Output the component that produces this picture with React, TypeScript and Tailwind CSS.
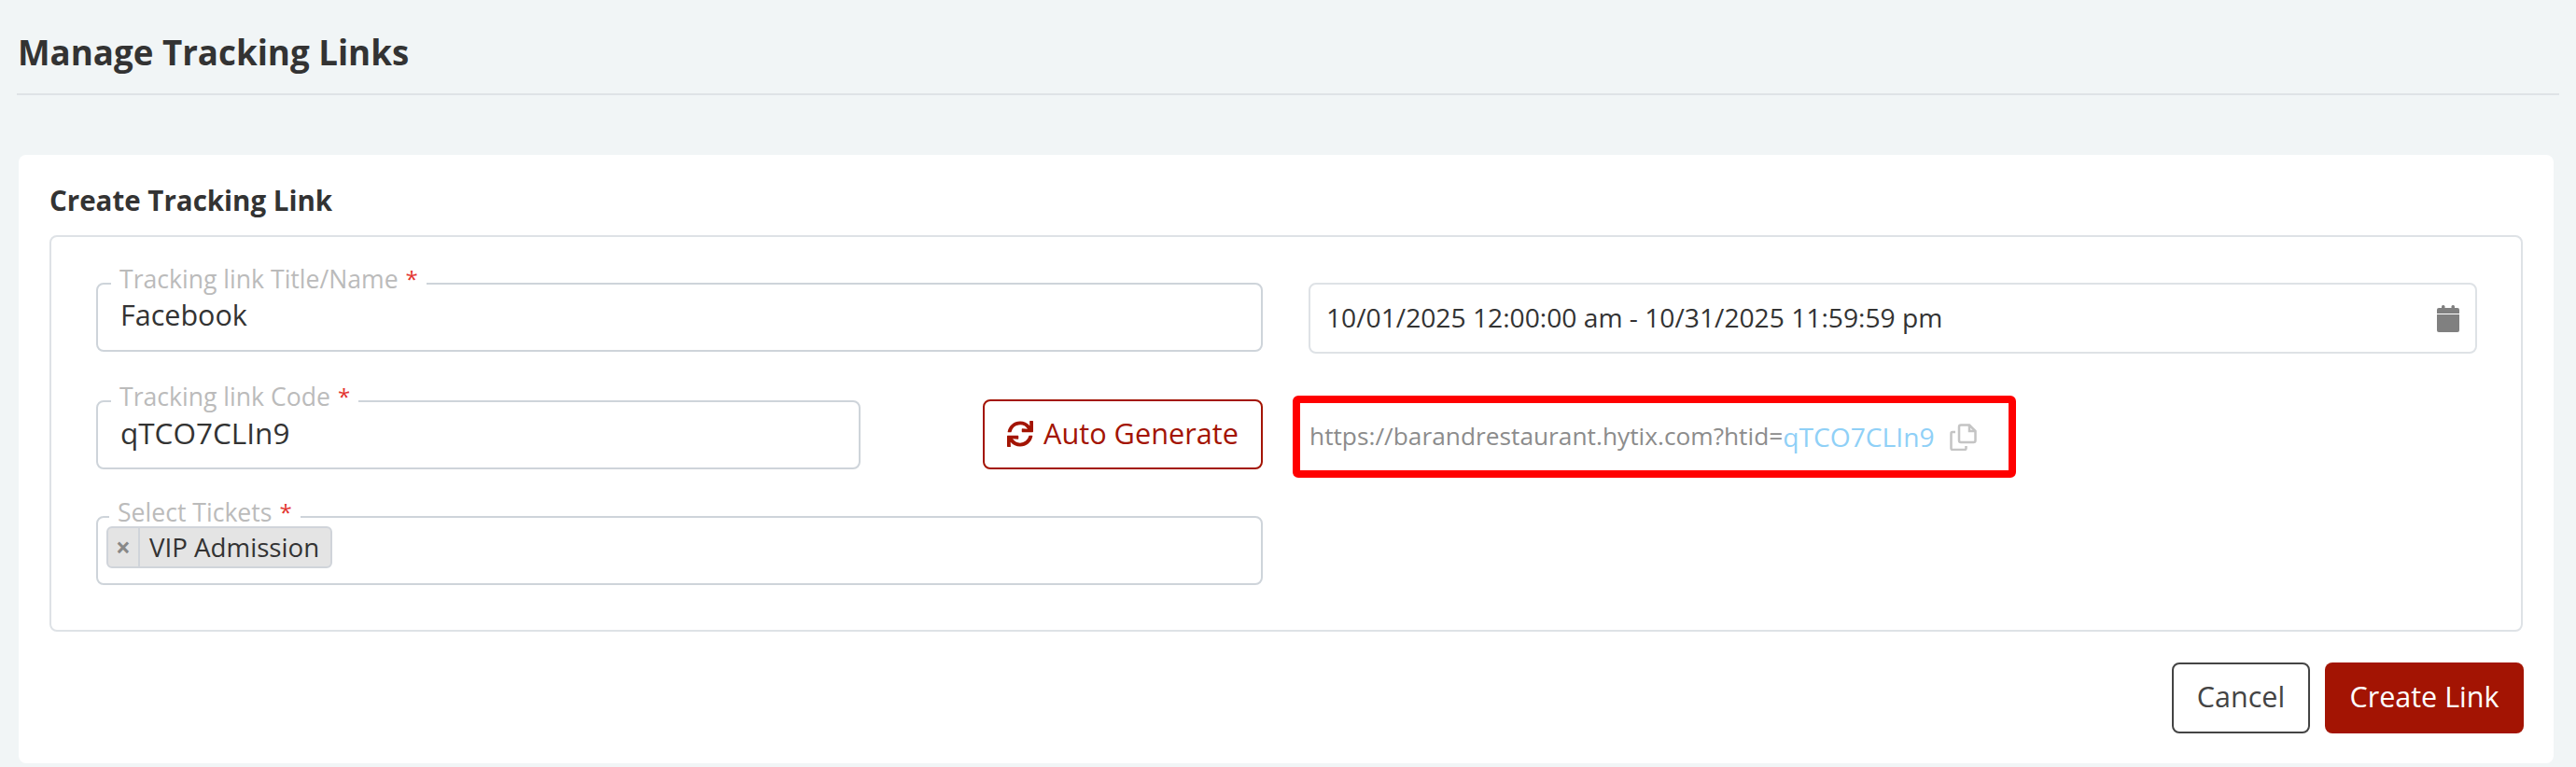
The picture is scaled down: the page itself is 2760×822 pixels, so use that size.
import { FaSync } from 'react-icons/fa';

const ui = "font-['Open_Sans','Noto_Sans',sans-serif]";

function Legend({ label, inset = 'left-[14px]' }: { label: string; inset?: string }) {
  return (
    <span className={`absolute top-[-21px] ${inset} flex h-[30px] items-center text-[26.6px] leading-none text-[#bbbbbb]`}>
      <span className="mt-[8px] h-[20px] bg-white pl-[9px]" />
      <span className="bg-white">{label}</span>
      <span className="bg-white pr-[9px] pl-[8px] text-[24px] text-[#e3342f]">*</span>
    </span>
  );
}

function Calendar() {
  return (
    <svg width="24" height="29" viewBox="0 0 24 29" fill="#808080" className="shrink-0">
      <rect x="5" y="0" width="3.5" height="6" rx="1.5" />
      <rect x="15.5" y="0" width="3.5" height="6" rx="1.5" />
      <path d="M2 3h20a2 2 0 0 1 2 2v4H0V5a2 2 0 0 1 2-2z" />
      <path d="M0 10h24v17a2 2 0 0 1-2 2H2a2 2 0 0 1-2-2z" />
    </svg>
  );
}

function CopyIcon() {
  return (
    <svg width="29" height="29" viewBox="0 0 29 29" fill="none" stroke="#c4c4c4" strokeWidth="2.5" className="ml-[16px] shrink-0">
      <path d="M12 1.5h9l6.5 6.5v10a2 2 0 0 1-2 2H12a2 2 0 0 1-2-2V3.5a2 2 0 0 1 2-2z" />
      <path d="M21 1.5V8h6.5" />
      <path d="M6 9H3a1.5 1.5 0 0 0-1.5 1.5v16A1.5 1.5 0 0 0 3 28h13a1.5 1.5 0 0 0 1.5-1.5V24" />
    </svg>
  );
}

export default function App() {
  return (
    <div className={`${ui} h-[822px] w-[2760px] overflow-hidden bg-[#f1f5f6] pt-[36px] pl-[18px] text-[#333333]`}>
      <div className="h-[66px] w-[2724px] border-b-2 border-[#dfe3e6]">
        <h1 className="pl-[1px] text-[36.7px] leading-[40px] font-bold">Manage Tracking Links</h1>
      </div>

      <div className="mt-[64px] ml-[2px] h-[652px] w-[2716px] rounded-[8px] bg-white pt-[24px] pl-[33px]">
        <h2 className="text-[29.5px] leading-[50px] font-bold">Create Tracking Link</h2>

        <div className="mt-[12px] h-[425px] w-[2650px] rounded-[8px] border-2 border-[#dee2e6] pt-[49px] pl-[48px]">
          <div className="flex items-start gap-[49px]">
            <div className="relative flex h-[74px] w-[1250px] items-center rounded-[8px] border-2 border-[#ced4da] pb-[4px] pl-[24px] text-[30.5px]">
              <Legend label="Tracking link Title/Name" />
              Facebook
            </div>
            <div className="flex h-[76px] w-[1252px] items-center justify-between rounded-[8px] border-2 border-[#dee2e6] pr-[17px] pl-[17px] text-[28.2px]">
              <span className="pb-[2px]">10/01/2025 12:00:00 am - 10/31/2025 11:59:59 pm</span>
              <Calendar />
            </div>
          </div>

          <div className="mt-[45px] flex items-start">
            <div className="relative mt-[5px] flex h-[74px] w-[819px] items-center rounded-[8px] border-2 border-[#ced4da] pb-[4px] pl-[24px] text-[31.5px]">
              <Legend label="Tracking link Code" />
              qTCO7CLIn9
            </div>
            <button className="mt-[4px] ml-[131px] flex h-[75px] w-[300px] items-center justify-center gap-[11px] rounded-[8px] border-2 border-[#a31403] pb-[2px] text-[30.7px] text-[#a31403]">
              <FaSync size={28} />
              Auto Generate
            </button>
            <div className="ml-[32px] flex h-[88px] w-[775px] items-center rounded-[6px] border-8 border-[#ff0000] pl-[10px]">
              <span className="text-[26.3px] text-[#8c8c8c]">https://barandrestaurant.hytix.com?htid=</span>
              <span className="text-[28.2px] text-[#8fd0f7]">qTCO7CLIn9</span>
              <CopyIcon />
            </div>
          </div>

          <div className="relative mt-[41px] flex h-[74px] w-[1250px] items-start rounded-[8px] border-2 border-[#ced4da] pt-[9px] pl-[9px] text-[27.7px]">
            <Legend label="Select Tickets" inset="left-[12px]" />
            <div className="flex h-[45px] w-[242px] items-center rounded-[6px] border-2 border-[#d0d4da] bg-[#e4e4e4]">
              <span className="flex h-full w-[34px] items-center justify-center border-r-2 border-[#d0d4da] font-bold text-[#888888]">×</span>
              <span className="pl-[10px]">VIP Admission</span>
            </div>
          </div>
        </div>

        <div className="mt-[33px] flex w-[2651px] justify-end gap-[16px] text-[30.5px]">
          <button className="h-[76px] w-[148px] rounded-[8px] border-2 border-[#444444] pb-[2px] text-[#444444]">Cancel</button>
          <button className="h-[76px] w-[213px] rounded-[8px] bg-[#a31403] pb-[2px] text-white">Create Link</button>
        </div>
      </div>
    </div>
  );
}
